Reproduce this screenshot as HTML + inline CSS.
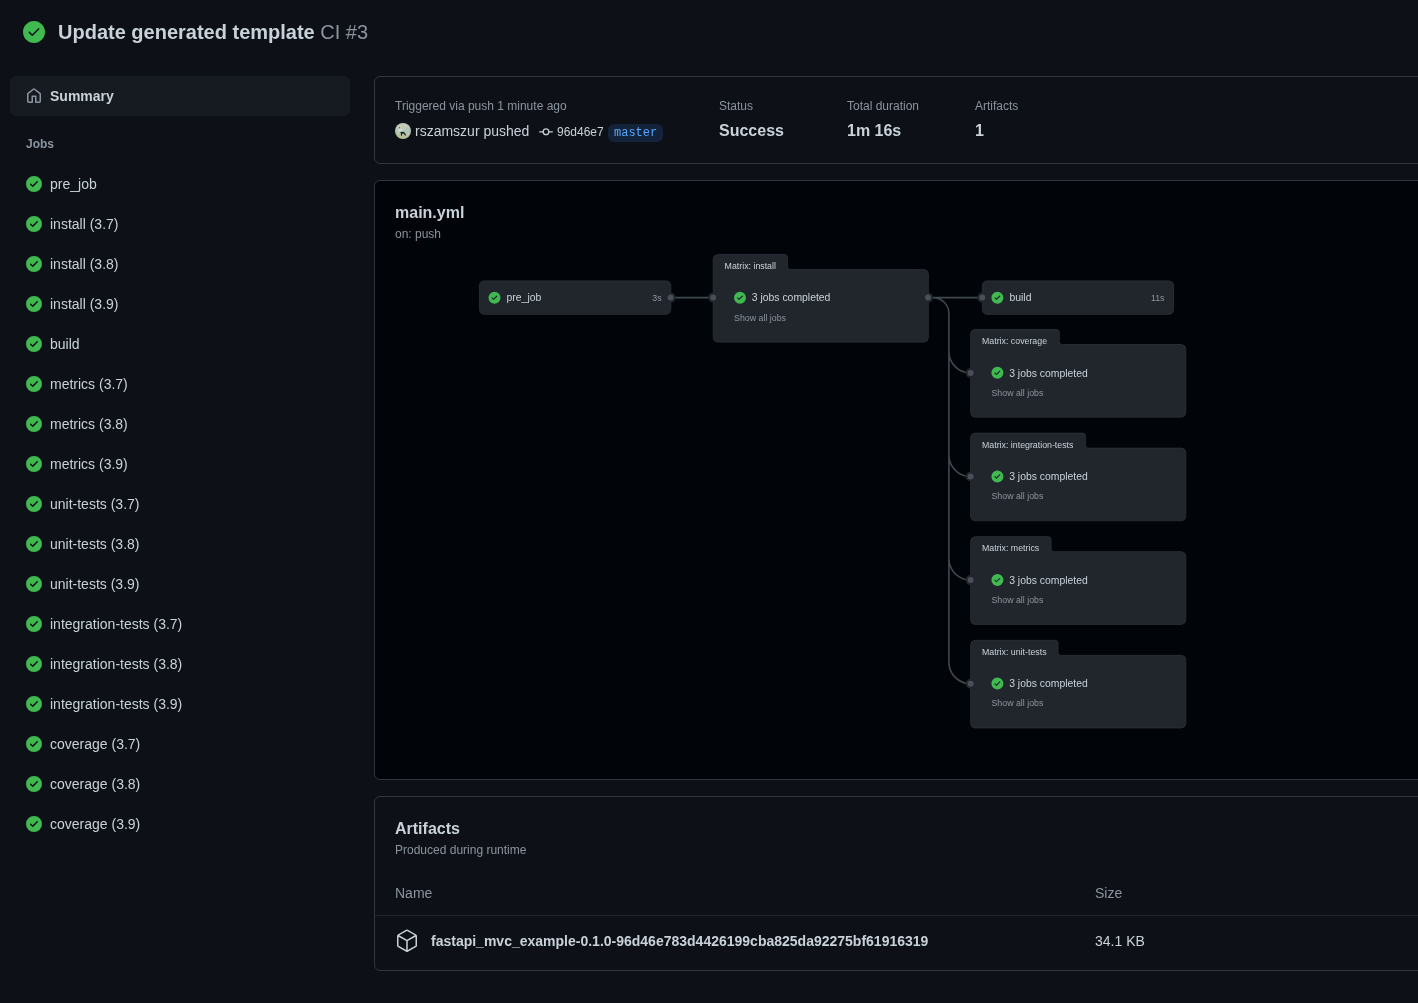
<!DOCTYPE html>
<html lang="en">
<head>
<meta charset="utf-8">
<title>Update generated template · CI #3</title>
<style>
*{box-sizing:border-box;margin:0;padding:0}
html,body{width:1418px;height:1003px;overflow:hidden;background:#0d1117}
body{font-family:"Liberation Sans",sans-serif;color:#c9d1d9;font-size:14px;line-height:1.5;position:relative}
#root{position:absolute;left:0;top:0;width:1418px;height:1003px;will-change:transform}
.abs{position:absolute}
svg{display:block}
/* header */
.hdr-ico{position:absolute;left:22px;top:20px;width:24px;height:24px;fill:#3fb950}
.title{position:absolute;left:58px;top:17px;font-size:20px;line-height:30px;font-weight:700;color:#c9d1d9;white-space:nowrap}
.title .sub{font-weight:400;color:#8b949e}
/* sidebar */
.summary{position:absolute;left:10px;top:76px;width:340px;height:40px;background:#161b22;border-radius:6px}
.summary svg{position:absolute;left:16px;top:12px;width:16px;height:16px;fill:#8b949e}
.summary span{position:absolute;left:40px;top:10px;font-size:14px;line-height:21px;font-weight:700;color:#c9d1d9}
.jobs-h{position:absolute;left:26px;top:135px;font-size:12px;line-height:18px;font-weight:700;color:#8b949e}
.job{position:absolute;left:10px;width:340px;height:40px}
.job svg{position:absolute;left:16px;top:12px;width:16px;height:16px;fill:#3fb950}
.job span{position:absolute;left:40px;top:10px;font-size:14px;line-height:21px;color:#c9d1d9;white-space:nowrap}
/* cards */
.card{position:absolute;left:374px;width:1100px;border:1px solid #30363d;border-radius:6px;background:#0d1117}
.muted{color:#8b949e}
.small{font-size:12px;line-height:18px}

/*GCSS*/
.gtext{position:absolute;left:0;top:0;width:1418px;height:1003px}
.gtext span{position:absolute;white-space:nowrap;line-height:1}
.gnl{font-size:10.4px;color:#c9d1d9}
.gsm{font-size:8.8px;color:#8b949e}
.gtb{font-size:8.8px;color:#c9d1d9}
/*GCSSEND*/
</style>
</head>
<body>
<div id="root">

<!-- header -->
<svg class="hdr-ico" viewBox="0 0 24 24"><path d="M1 12C1 5.925 5.925 1 12 1s11 4.925 11 11-4.925 11-11 11S1 18.075 1 12Zm16.28-2.72a.751.751 0 0 0-.018-1.042.751.751 0 0 0-1.042-.018l-5.97 5.97-2.47-2.47a.751.751 0 0 0-1.042.018.751.751 0 0 0-.018 1.042l3 3a.75.75 0 0 0 1.06 0Z"/></svg>
<div class="title">Update generated template <span class="sub">CI #3</span></div>

<!-- sidebar -->
<div class="summary">
  <svg viewBox="0 0 16 16"><path d="M6.906.664a1.749 1.749 0 0 1 2.187 0l5.25 4.2c.415.332.657.835.657 1.367v7.019A1.75 1.75 0 0 1 13.25 15h-3.5a.75.75 0 0 1-.75-.75V9H7v5.25a.75.75 0 0 1-.75.75h-3.5A1.75 1.75 0 0 1 1 13.25V6.23c0-.531.242-1.034.657-1.366l5.25-4.2Zm1.25 1.171a.25.25 0 0 0-.312 0l-5.25 4.2a.25.25 0 0 0-.094.196v7.019c0 .138.112.25.25.25H5.5V8.25a.75.75 0 0 1 .75-.75h3.5a.75.75 0 0 1 .75.75v5.25h2.75a.25.25 0 0 0 .25-.25V6.23a.25.25 0 0 0-.094-.195Z"/></svg>
  <span>Summary</span>
</div>
<div class="jobs-h">Jobs</div>

<div class="job" style="top:164px"><svg viewBox="0 0 16 16"><path d="M8 16A8 8 0 1 1 8 0a8 8 0 0 1 0 16Zm3.78-9.72a.751.751 0 0 0-.018-1.042.751.751 0 0 0-1.042-.018L6.75 9.19 5.28 7.72a.751.751 0 0 0-1.042.018.751.751 0 0 0-.018 1.042l2 2a.75.75 0 0 0 1.06 0Z"/></svg><span>pre_job</span></div>
<div class="job" style="top:204px"><svg viewBox="0 0 16 16"><path d="M8 16A8 8 0 1 1 8 0a8 8 0 0 1 0 16Zm3.78-9.72a.751.751 0 0 0-.018-1.042.751.751 0 0 0-1.042-.018L6.75 9.19 5.28 7.72a.751.751 0 0 0-1.042.018.751.751 0 0 0-.018 1.042l2 2a.75.75 0 0 0 1.06 0Z"/></svg><span>install (3.7)</span></div>
<div class="job" style="top:244px"><svg viewBox="0 0 16 16"><path d="M8 16A8 8 0 1 1 8 0a8 8 0 0 1 0 16Zm3.78-9.72a.751.751 0 0 0-.018-1.042.751.751 0 0 0-1.042-.018L6.75 9.19 5.28 7.72a.751.751 0 0 0-1.042.018.751.751 0 0 0-.018 1.042l2 2a.75.75 0 0 0 1.06 0Z"/></svg><span>install (3.8)</span></div>
<div class="job" style="top:284px"><svg viewBox="0 0 16 16"><path d="M8 16A8 8 0 1 1 8 0a8 8 0 0 1 0 16Zm3.78-9.72a.751.751 0 0 0-.018-1.042.751.751 0 0 0-1.042-.018L6.75 9.19 5.28 7.72a.751.751 0 0 0-1.042.018.751.751 0 0 0-.018 1.042l2 2a.75.75 0 0 0 1.06 0Z"/></svg><span>install (3.9)</span></div>
<div class="job" style="top:324px"><svg viewBox="0 0 16 16"><path d="M8 16A8 8 0 1 1 8 0a8 8 0 0 1 0 16Zm3.78-9.72a.751.751 0 0 0-.018-1.042.751.751 0 0 0-1.042-.018L6.75 9.19 5.28 7.72a.751.751 0 0 0-1.042.018.751.751 0 0 0-.018 1.042l2 2a.75.75 0 0 0 1.06 0Z"/></svg><span>build</span></div>
<div class="job" style="top:364px"><svg viewBox="0 0 16 16"><path d="M8 16A8 8 0 1 1 8 0a8 8 0 0 1 0 16Zm3.78-9.72a.751.751 0 0 0-.018-1.042.751.751 0 0 0-1.042-.018L6.75 9.19 5.28 7.72a.751.751 0 0 0-1.042.018.751.751 0 0 0-.018 1.042l2 2a.75.75 0 0 0 1.06 0Z"/></svg><span>metrics (3.7)</span></div>
<div class="job" style="top:404px"><svg viewBox="0 0 16 16"><path d="M8 16A8 8 0 1 1 8 0a8 8 0 0 1 0 16Zm3.78-9.72a.751.751 0 0 0-.018-1.042.751.751 0 0 0-1.042-.018L6.75 9.19 5.28 7.72a.751.751 0 0 0-1.042.018.751.751 0 0 0-.018 1.042l2 2a.75.75 0 0 0 1.06 0Z"/></svg><span>metrics (3.8)</span></div>
<div class="job" style="top:444px"><svg viewBox="0 0 16 16"><path d="M8 16A8 8 0 1 1 8 0a8 8 0 0 1 0 16Zm3.78-9.72a.751.751 0 0 0-.018-1.042.751.751 0 0 0-1.042-.018L6.75 9.19 5.28 7.72a.751.751 0 0 0-1.042.018.751.751 0 0 0-.018 1.042l2 2a.75.75 0 0 0 1.06 0Z"/></svg><span>metrics (3.9)</span></div>
<div class="job" style="top:484px"><svg viewBox="0 0 16 16"><path d="M8 16A8 8 0 1 1 8 0a8 8 0 0 1 0 16Zm3.78-9.72a.751.751 0 0 0-.018-1.042.751.751 0 0 0-1.042-.018L6.75 9.19 5.28 7.72a.751.751 0 0 0-1.042.018.751.751 0 0 0-.018 1.042l2 2a.75.75 0 0 0 1.06 0Z"/></svg><span>unit-tests (3.7)</span></div>
<div class="job" style="top:524px"><svg viewBox="0 0 16 16"><path d="M8 16A8 8 0 1 1 8 0a8 8 0 0 1 0 16Zm3.78-9.72a.751.751 0 0 0-.018-1.042.751.751 0 0 0-1.042-.018L6.75 9.19 5.28 7.72a.751.751 0 0 0-1.042.018.751.751 0 0 0-.018 1.042l2 2a.75.75 0 0 0 1.06 0Z"/></svg><span>unit-tests (3.8)</span></div>
<div class="job" style="top:564px"><svg viewBox="0 0 16 16"><path d="M8 16A8 8 0 1 1 8 0a8 8 0 0 1 0 16Zm3.78-9.72a.751.751 0 0 0-.018-1.042.751.751 0 0 0-1.042-.018L6.75 9.19 5.28 7.72a.751.751 0 0 0-1.042.018.751.751 0 0 0-.018 1.042l2 2a.75.75 0 0 0 1.06 0Z"/></svg><span>unit-tests (3.9)</span></div>
<div class="job" style="top:604px"><svg viewBox="0 0 16 16"><path d="M8 16A8 8 0 1 1 8 0a8 8 0 0 1 0 16Zm3.78-9.72a.751.751 0 0 0-.018-1.042.751.751 0 0 0-1.042-.018L6.75 9.19 5.28 7.72a.751.751 0 0 0-1.042.018.751.751 0 0 0-.018 1.042l2 2a.75.75 0 0 0 1.06 0Z"/></svg><span>integration-tests (3.7)</span></div>
<div class="job" style="top:644px"><svg viewBox="0 0 16 16"><path d="M8 16A8 8 0 1 1 8 0a8 8 0 0 1 0 16Zm3.78-9.72a.751.751 0 0 0-.018-1.042.751.751 0 0 0-1.042-.018L6.75 9.19 5.28 7.72a.751.751 0 0 0-1.042.018.751.751 0 0 0-.018 1.042l2 2a.75.75 0 0 0 1.06 0Z"/></svg><span>integration-tests (3.8)</span></div>
<div class="job" style="top:684px"><svg viewBox="0 0 16 16"><path d="M8 16A8 8 0 1 1 8 0a8 8 0 0 1 0 16Zm3.78-9.72a.751.751 0 0 0-.018-1.042.751.751 0 0 0-1.042-.018L6.75 9.19 5.28 7.72a.751.751 0 0 0-1.042.018.751.751 0 0 0-.018 1.042l2 2a.75.75 0 0 0 1.06 0Z"/></svg><span>integration-tests (3.9)</span></div>
<div class="job" style="top:724px"><svg viewBox="0 0 16 16"><path d="M8 16A8 8 0 1 1 8 0a8 8 0 0 1 0 16Zm3.78-9.72a.751.751 0 0 0-.018-1.042.751.751 0 0 0-1.042-.018L6.75 9.19 5.28 7.72a.751.751 0 0 0-1.042.018.751.751 0 0 0-.018 1.042l2 2a.75.75 0 0 0 1.06 0Z"/></svg><span>coverage (3.7)</span></div>
<div class="job" style="top:764px"><svg viewBox="0 0 16 16"><path d="M8 16A8 8 0 1 1 8 0a8 8 0 0 1 0 16Zm3.78-9.72a.751.751 0 0 0-.018-1.042.751.751 0 0 0-1.042-.018L6.75 9.19 5.28 7.72a.751.751 0 0 0-1.042.018.751.751 0 0 0-.018 1.042l2 2a.75.75 0 0 0 1.06 0Z"/></svg><span>coverage (3.8)</span></div>
<div class="job" style="top:804px"><svg viewBox="0 0 16 16"><path d="M8 16A8 8 0 1 1 8 0a8 8 0 0 1 0 16Zm3.78-9.72a.751.751 0 0 0-.018-1.042.751.751 0 0 0-1.042-.018L6.75 9.19 5.28 7.72a.751.751 0 0 0-1.042.018.751.751 0 0 0-.018 1.042l2 2a.75.75 0 0 0 1.06 0Z"/></svg><span>coverage (3.9)</span></div>

<div class="card" style="top:76px;height:88px">
  <div class="abs muted small" style="left:20px;top:20px;white-space:nowrap">Triggered via push 1 minute ago</div>
  <!-- avatar -->
  <svg class="abs" style="left:20px;top:46px;width:16px;height:16px" viewBox="0 0 16 16">
    <defs><clipPath id="avc"><circle cx="8" cy="8" r="8"/></clipPath><filter id="avb" x="-10%" y="-10%" width="120%" height="120%"><feGaussianBlur stdDeviation=".35"/></filter></defs>
    <g clip-path="url(#avc)"><g filter="url(#avb)">
      <rect x="-2" y="-2" width="20" height="20" fill="#b8c3ae"/>
      <rect x="-2" y="-2" width="20" height="6.5" fill="#c2cab7"/>
      <ellipse cx="10" cy="7.2" rx="7" ry="2" fill="#b3c5b9"/>
      <rect x="-2" y="11.8" width="20" height="6" fill="#b9be93"/>
      <rect x="9" y="10.5" width="9" height="3" fill="#bcc3aa"/>
      <ellipse cx="5.4" cy="6.9" rx="2.5" ry="1.9" fill="#c9dfd8"/>
      <path d="M5.5 1.2Q7.4 3.6 6.8 6.6L5.2 6.9Q4.5 3.6 5.5 1.2Z" fill="#cfc8b6"/>
      <circle cx="4.5" cy="4.7" r=".55" fill="#2a3030"/>
      <path d="M5.3 9.1C7 8.4 9 8.7 10 9.9L11.2 12.2 10.3 12.7 8.8 10.7 7.1 10.7 7 12.7 6 12.7 5.8 10.5Z" fill="#1c2824"/>
    </g></g>
  </svg>
  <div class="abs" style="left:40px;top:44px;font-size:14px;line-height:21px;white-space:nowrap;color:#c9d1d9">rszamszur pushed</div>
  <svg class="abs" style="left:164px;top:48px;width:14px;height:14px;fill:#c9d1d9" viewBox="0 0 16 16"><path d="M11.93 8.5a4.002 4.002 0 0 1-7.86 0H.75a.75.75 0 0 1 0-1.5h3.32a4.002 4.002 0 0 1 7.86 0h3.32a.75.75 0 0 1 0 1.5Zm-1.43-.75a2.5 2.5 0 1 0-5 0 2.5 2.5 0 0 0 5 0Z"/></svg>
  <div class="abs" style="left:182px;top:46px;font-size:12px;line-height:18px;white-space:nowrap;color:#c9d1d9">96d46e7</div>
  <div class="abs" style="left:233px;top:47px;height:18px;padding:0 6px;border-radius:6px;background:#13233a;color:#58a6ff;font-family:'Liberation Mono',monospace;font-size:12px;line-height:18px;white-space:nowrap">master</div>

  <div class="abs muted small" style="left:344px;top:20px">Status</div>
  <div class="abs" style="left:344px;top:42px;font-size:16px;line-height:24px;font-weight:700;color:#c9d1d9">Success</div>
  <div class="abs muted small" style="left:472px;top:20px;white-space:nowrap">Total duration</div>
  <div class="abs" style="left:472px;top:42px;font-size:16px;line-height:24px;font-weight:700;color:#c9d1d9;white-space:nowrap">1m 16s</div>
  <div class="abs muted small" style="left:600px;top:20px">Artifacts</div>
  <div class="abs" style="left:600px;top:42px;font-size:16px;line-height:24px;font-weight:700;color:#c9d1d9">1</div>
</div>


<!-- CARD2 START -->
<div class="card" style="top:180px;height:600px;background:#010409">
<div class="abs" style="left:20px;top:20px;font-size:16px;line-height:24px;font-weight:700;color:#c9d1d9">main.yml</div>
<div class="abs muted small" style="left:20px;top:44px;white-space:nowrap">on: push</div>
</div>
<svg class="abs" style="left:0;top:0" width="1418" height="1003" viewBox="0 0 1418 1003">
<path d="M671 297.6 H713 M929 297.6 H982 M929 297.6 H932.9 A16 16 0 0 1 948.9 313.6 V351.4 A21.5 21.5 0 0 0 970.4 372.9 M929 297.6 H932.9 A16 16 0 0 1 948.9 313.6 V455.0 A21.5 21.5 0 0 0 970.4 476.5 M929 297.6 H932.9 A16 16 0 0 1 948.9 313.6 V558.6 A21.5 21.5 0 0 0 970.4 580.1 M929 297.6 H932.9 A16 16 0 0 1 948.9 313.6 V662.2 A21.5 21.5 0 0 0 970.4 683.7" fill="none" stroke="#414850" stroke-width="1.6"/>
<rect x="479.40" y="280.90" width="191.40" height="33.40" rx="4.8" fill="#21262d" stroke="#2c323a" stroke-width=".8"/>
<g transform="translate(488.50 291.70) scale(.75)" fill="#3fb950"><path d="M8 16A8 8 0 1 1 8 0a8 8 0 0 1 0 16Zm3.78-9.72a.751.751 0 0 0-.018-1.042.751.751 0 0 0-1.042-.018L6.75 9.19 5.28 7.72a.751.751 0 0 0-1.042.018.751.751 0 0 0-.018 1.042l2 2a.75.75 0 0 0 1.06 0Z"/></g>
<rect x="982.30" y="280.90" width="191.40" height="33.40" rx="4.8" fill="#21262d" stroke="#2c323a" stroke-width=".8"/>
<g transform="translate(991.40 291.70) scale(.75)" fill="#3fb950"><path d="M8 16A8 8 0 1 1 8 0a8 8 0 0 1 0 16Zm3.78-9.72a.751.751 0 0 0-.018-1.042.751.751 0 0 0-1.042-.018L6.75 9.19 5.28 7.72a.751.751 0 0 0-1.042.018.751.751 0 0 0-.018 1.042l2 2a.75.75 0 0 0 1.06 0Z"/></g>
<path d="M713.20 258.80 A4.8 4.8 0 0 1 717.60 254.40 H785.00 A3.0 3.0 0 0 1 787.60 257.00 V266.00 A3.0 3.0 0 0 0 791.00 269.40 H924.00 A4.8 4.8 0 0 1 928.40 273.80 V337.70 A4.8 4.8 0 0 1 924.00 342.10 H717.60 A4.8 4.8 0 0 1 713.20 337.70 Z" fill="#21262d" stroke="#2c323a" stroke-width=".8"/>
<g transform="translate(734.00 291.70) scale(.75)" fill="#3fb950"><path d="M8 16A8 8 0 1 1 8 0a8 8 0 0 1 0 16Zm3.78-9.72a.751.751 0 0 0-.018-1.042.751.751 0 0 0-1.042-.018L6.75 9.19 5.28 7.72a.751.751 0 0 0-1.042.018.751.751 0 0 0-.018 1.042l2 2a.75.75 0 0 0 1.06 0Z"/></g>
<path d="M970.60 333.90 A4.8 4.8 0 0 1 975.00 329.50 H1056.80 A3.0 3.0 0 0 1 1059.40 332.10 V341.10 A3.0 3.0 0 0 0 1062.80 344.50 H1181.40 A4.8 4.8 0 0 1 1185.80 348.90 V412.80 A4.8 4.8 0 0 1 1181.40 417.20 H975.00 A4.8 4.8 0 0 1 970.60 412.80 Z" fill="#21262d" stroke="#2c323a" stroke-width=".8"/>
<g transform="translate(991.40 366.80) scale(.75)" fill="#3fb950"><path d="M8 16A8 8 0 1 1 8 0a8 8 0 0 1 0 16Zm3.78-9.72a.751.751 0 0 0-.018-1.042.751.751 0 0 0-1.042-.018L6.75 9.19 5.28 7.72a.751.751 0 0 0-1.042.018.751.751 0 0 0-.018 1.042l2 2a.75.75 0 0 0 1.06 0Z"/></g>
<path d="M970.60 437.50 A4.8 4.8 0 0 1 975.00 433.10 H1083.00 A3.0 3.0 0 0 1 1085.60 435.70 V444.70 A3.0 3.0 0 0 0 1089.00 448.10 H1181.40 A4.8 4.8 0 0 1 1185.80 452.50 V516.40 A4.8 4.8 0 0 1 1181.40 520.80 H975.00 A4.8 4.8 0 0 1 970.60 516.40 Z" fill="#21262d" stroke="#2c323a" stroke-width=".8"/>
<g transform="translate(991.40 470.40) scale(.75)" fill="#3fb950"><path d="M8 16A8 8 0 1 1 8 0a8 8 0 0 1 0 16Zm3.78-9.72a.751.751 0 0 0-.018-1.042.751.751 0 0 0-1.042-.018L6.75 9.19 5.28 7.72a.751.751 0 0 0-1.042.018.751.751 0 0 0-.018 1.042l2 2a.75.75 0 0 0 1.06 0Z"/></g>
<path d="M970.60 541.10 A4.8 4.8 0 0 1 975.00 536.70 H1048.50 A3.0 3.0 0 0 1 1051.10 539.30 V548.30 A3.0 3.0 0 0 0 1054.50 551.70 H1181.40 A4.8 4.8 0 0 1 1185.80 556.10 V620.00 A4.8 4.8 0 0 1 1181.40 624.40 H975.00 A4.8 4.8 0 0 1 970.60 620.00 Z" fill="#21262d" stroke="#2c323a" stroke-width=".8"/>
<g transform="translate(991.40 574.00) scale(.75)" fill="#3fb950"><path d="M8 16A8 8 0 1 1 8 0a8 8 0 0 1 0 16Zm3.78-9.72a.751.751 0 0 0-.018-1.042.751.751 0 0 0-1.042-.018L6.75 9.19 5.28 7.72a.751.751 0 0 0-1.042.018.751.751 0 0 0-.018 1.042l2 2a.75.75 0 0 0 1.06 0Z"/></g>
<path d="M970.60 644.70 A4.8 4.8 0 0 1 975.00 640.30 H1055.50 A3.0 3.0 0 0 1 1058.10 642.90 V651.90 A3.0 3.0 0 0 0 1061.50 655.30 H1181.40 A4.8 4.8 0 0 1 1185.80 659.70 V723.60 A4.8 4.8 0 0 1 1181.40 728.00 H975.00 A4.8 4.8 0 0 1 970.60 723.60 Z" fill="#21262d" stroke="#2c323a" stroke-width=".8"/>
<g transform="translate(991.40 677.60) scale(.75)" fill="#3fb950"><path d="M8 16A8 8 0 1 1 8 0a8 8 0 0 1 0 16Zm3.78-9.72a.751.751 0 0 0-.018-1.042.751.751 0 0 0-1.042-.018L6.75 9.19 5.28 7.72a.751.751 0 0 0-1.042.018.751.751 0 0 0-.018 1.042l2 2a.75.75 0 0 0 1.06 0Z"/></g>
<circle cx="670.6" cy="297.6" r="4" fill="#484f58" stroke="#21262d" stroke-width="2"/>
<circle cx="713.2" cy="297.6" r="4" fill="#484f58" stroke="#21262d" stroke-width="2"/>
<circle cx="928.0" cy="297.6" r="4" fill="#484f58" stroke="#21262d" stroke-width="2"/>
<circle cx="982.3" cy="297.6" r="4" fill="#484f58" stroke="#21262d" stroke-width="2"/>
<circle cx="970.6" cy="372.9" r="4" fill="#484f58" stroke="#21262d" stroke-width="2"/>
<circle cx="970.6" cy="476.5" r="4" fill="#484f58" stroke="#21262d" stroke-width="2"/>
<circle cx="970.6" cy="580.1" r="4" fill="#484f58" stroke="#21262d" stroke-width="2"/>
<circle cx="970.6" cy="683.7" r="4" fill="#484f58" stroke="#21262d" stroke-width="2"/>
</svg>
<div class="gtext">
<span class="gnl" style="left:506.60px;top:293.10px">pre_job</span>
<span class="gsm" style="right:756.40px;top:293.60px">3s</span>
<span class="gnl" style="left:1009.50px;top:293.10px">build</span>
<span class="gsm" style="right:253.50px;top:293.60px">11s</span>
<span class="gnl" style="left:751.80px;top:293.10px">3 jobs completed</span>
<span class="gsm" style="left:734.10px;top:313.60px">Show all jobs</span>
<span class="gtb" style="left:724.60px;top:261.60px">Matrix: install</span>
<span class="gnl" style="left:1009.20px;top:369.10px">3 jobs completed</span>
<span class="gsm" style="left:991.50px;top:388.60px">Show all jobs</span>
<span class="gtb" style="left:982.00px;top:336.60px">Matrix: coverage</span>
<span class="gnl" style="left:1009.20px;top:472.10px">3 jobs completed</span>
<span class="gsm" style="left:991.50px;top:491.60px">Show all jobs</span>
<span class="gtb" style="left:982.00px;top:440.60px">Matrix: integration-tests</span>
<span class="gnl" style="left:1009.20px;top:576.10px">3 jobs completed</span>
<span class="gsm" style="left:991.50px;top:595.60px">Show all jobs</span>
<span class="gtb" style="left:982.00px;top:543.60px">Matrix: metrics</span>
<span class="gnl" style="left:1009.20px;top:679.10px">3 jobs completed</span>
<span class="gsm" style="left:991.50px;top:698.60px">Show all jobs</span>
<span class="gtb" style="left:982.00px;top:647.60px">Matrix: unit-tests</span>
</div>
<!-- CARD2 END -->

<!-- CARD3 START -->
<div class="card" style="top:796px;height:175px">
  <div class="abs" style="left:20px;top:20px;font-size:16px;line-height:24px;font-weight:700;color:#c9d1d9">Artifacts</div>
  <div class="abs muted small" style="left:20px;top:44px;white-space:nowrap">Produced during runtime</div>
  <div class="abs muted" style="left:20px;top:86px;font-size:14px;line-height:21px">Name</div>
  <div class="abs muted" style="left:720px;top:86px;font-size:14px;line-height:21px">Size</div>
  <div class="abs" style="left:0;top:118px;width:1100px;height:1px;background:#21262d"></div>
  <svg class="abs" style="left:20px;top:132px;width:24px;height:24px;fill:#c9d1d9" viewBox="0 0 24 24"><path d="M12.876.64V.639l8.25 4.763c.541.313.875.89.875 1.515v9.525a1.75 1.75 0 0 1-.875 1.516l-8.25 4.762a1.748 1.748 0 0 1-1.75 0l-8.25-4.763a1.75 1.75 0 0 1-.875-1.515V6.917c0-.625.334-1.202.875-1.515L11.126.64a1.748 1.748 0 0 1 1.75 0Zm-1 1.298L4.251 6.34l7.75 4.474 7.75-4.474-7.625-4.402a.248.248 0 0 0-.25 0Zm.875 19.123 7.625-4.402a.25.25 0 0 0 .125-.216V7.639l-7.75 4.474ZM3.501 7.64v8.803c0 .09.048.172.125.216l7.625 4.402v-8.947Z"/></svg>
  <div class="abs" style="left:56px;top:134px;font-size:14px;line-height:21px;font-weight:700;color:#c9d1d9;white-space:nowrap">fastapi_mvc_example-0.1.0-96d46e783d4426199cba825da92275bf61916319</div>
  <div class="abs" style="left:720px;top:134px;font-size:14px;line-height:21px;color:#c9d1d9;white-space:nowrap">34.1 KB</div>
</div>

<!-- CARD3 END -->

</div>
</body>
</html>
